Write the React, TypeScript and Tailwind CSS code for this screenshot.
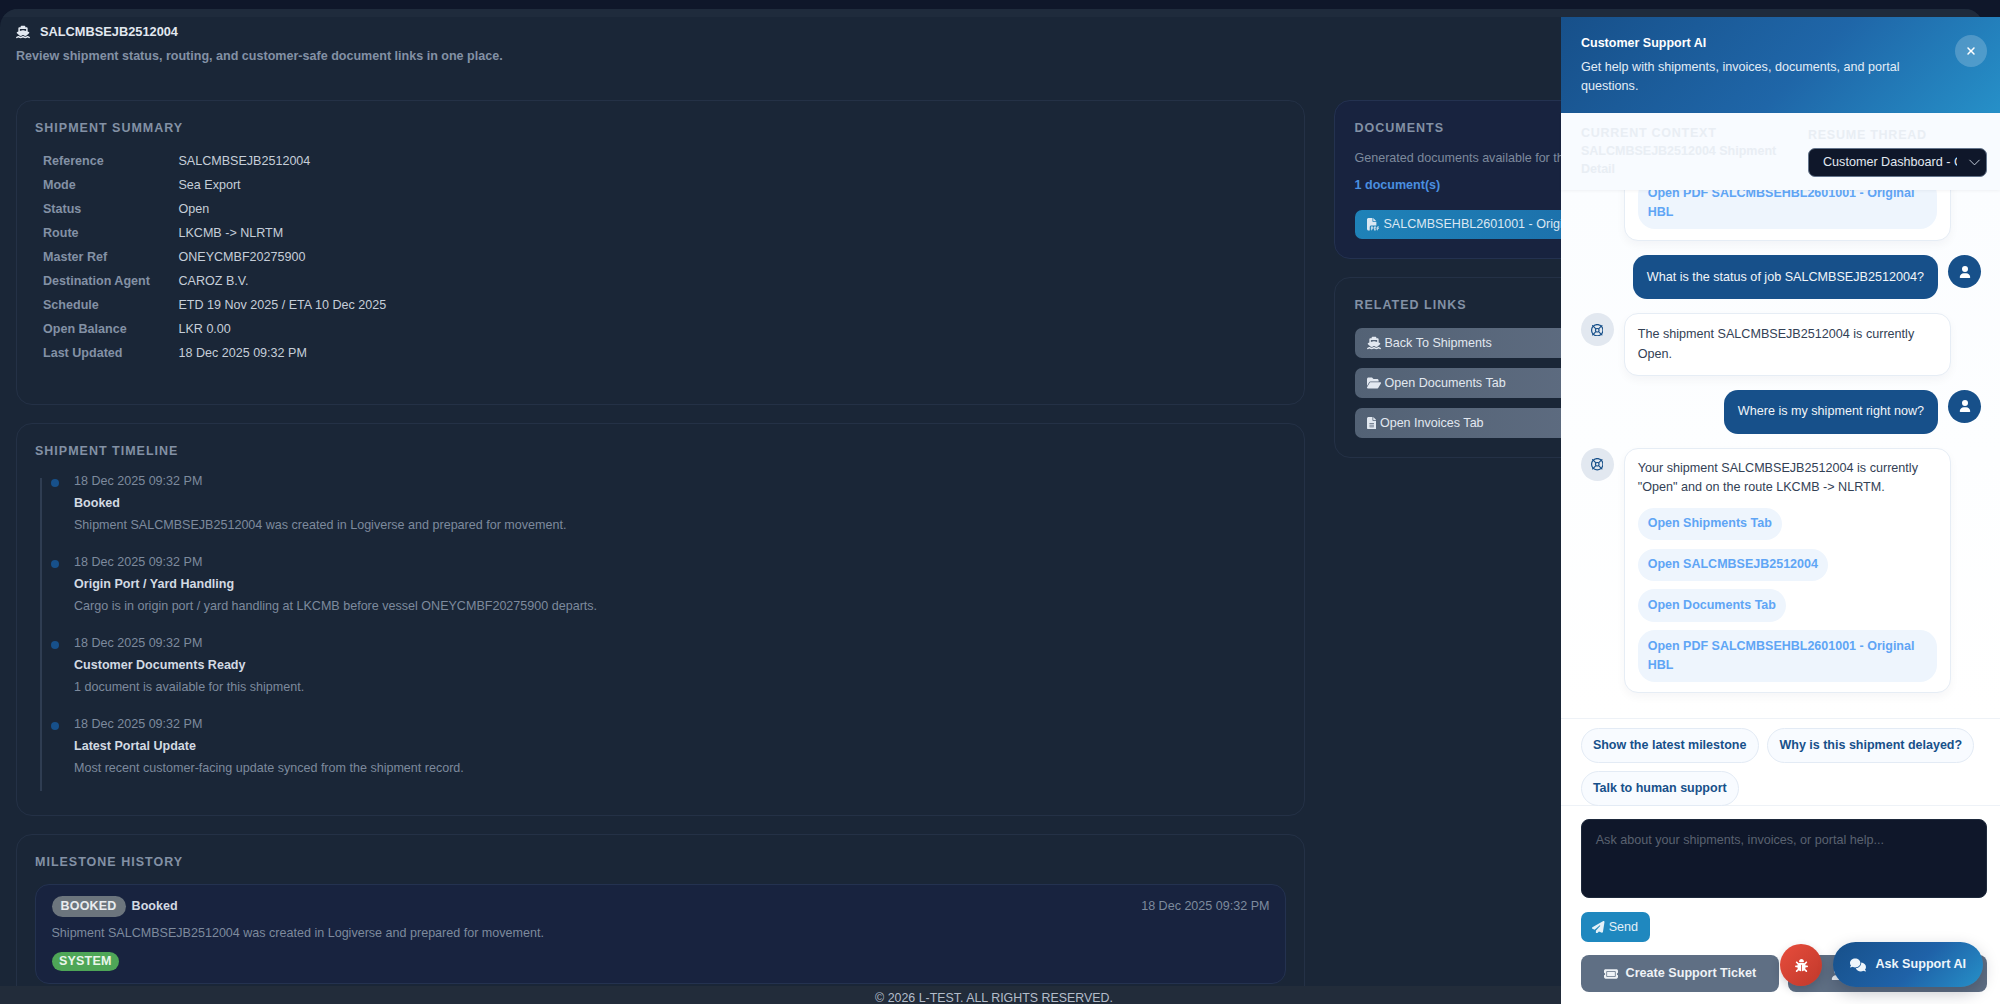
import { FaShip, FaFilePdf, FaFolderOpen, FaFileLines, FaUser, FaRegLifeRing, FaPaperPlane, FaTicket, FaBug, FaComments, FaXmark } from "react-icons/fa6"
import { ChevronDown } from "lucide-react"

const summary = [
  ["Reference", "SALCMBSEJB2512004"],
  ["Mode", "Sea Export"],
  ["Status", "Open"],
  ["Route", "LKCMB -> NLRTM"],
  ["Master Ref", "ONEYCMBF20275900"],
  ["Destination Agent", "CAROZ B.V."],
  ["Schedule", "ETD 19 Nov 2025 / ETA 10 Dec 2025"],
  ["Open Balance", "LKR 0.00"],
  ["Last Updated", "18 Dec 2025 09:32 PM"],
]

const timeline = [
  ["Booked", "Shipment SALCMBSEJB2512004 was created in Logiverse and prepared for movement."],
  ["Origin Port / Yard Handling", "Cargo is in origin port / yard handling at LKCMB before vessel ONEYCMBF20275900 departs."],
  ["Customer Documents Ready", "1 document is available for this shipment."],
  ["Latest Portal Update", "Most recent customer-facing update synced from the shipment record."],
]

function SectionTitle({ children }: { children: string }) {
  return <h3 className="text-[12.5px] leading-[16px] font-bold tracking-[1px] text-[#8391a5]">{children}</h3>
}

function Pill({ children }: { children: string }) {
  return <div className="w-fit rounded-[17px] bg-[#eef5fd] px-[10px] py-[6.5px] text-[12.5px] leading-[19.3px] font-bold text-[#5fa5f5]">{children}</div>
}

function BotAvatar() {
  return (
    <div className="flex h-[33px] w-[33px] shrink-0 items-center justify-center rounded-full bg-[#e2e8f0] text-[12.5px] text-[#17508a]">
      <FaRegLifeRing />
    </div>
  )
}

function UserRow({ text }: { text: string }) {
  return (
    <div className="flex items-start justify-end gap-[10px]">
      <div className="rounded-[14px] bg-[#17508a] px-[14px] py-[12.35px] text-[12.6px] leading-[19.3px] text-[#f1f5f9]">{text}</div>
      <div className="flex h-[33px] w-[33px] shrink-0 items-center justify-center rounded-full bg-[#17508a] text-[12px] text-white">
        <FaUser />
      </div>
    </div>
  )
}

function RelatedLink({ icon, label }: { icon: React.ReactNode; label: string }) {
  return (
    <div className="flex h-[30px] w-[260px] items-center gap-[3.5px] rounded-[7px] bg-[linear-gradient(90deg,#536275,#5f6d82)] px-[12.5px] text-[12.55px] text-[#e2e8f0]">
      {icon}
      {label}
    </div>
  )
}

export default function App() {
  return (
    <div className="relative flex h-[1004px] w-[2000px] flex-col overflow-hidden bg-[#0f172a] font-['Liberation_Sans',Arial,sans-serif]">
      <div className="min-h-0 flex-1 pt-[9px] pr-[17px]">
        <div className="h-full overflow-hidden rounded-t-[18px] bg-[#1a2637]">
          {/* Page header */}
          <div className="h-[8px] bg-[#1f2b3c]" />
          <div className="px-[16px] pt-[7px]">
            <div className="flex h-[16px] items-center gap-[10px] text-[12.8px] font-bold text-[#e2e8f0]">
              <FaShip className="text-[14px]" />
              SALCMBSEJB2512004
            </div>
            <p className="mt-[8px] text-[12.55px] leading-[16px] font-bold text-[#8391a5]">
              Review shipment status, routing, and customer-safe document links in one place.
            </p>
          </div>

          <div className="mt-[36px] grid grid-cols-[1289px_633px] gap-[29px] px-[16px]">
            {/* Left column */}
            <div className="flex flex-col gap-[18px]">
              <section className="h-[305px] rounded-[16px] border border-[#243146] px-[18px] pt-[19px]">
                <SectionTitle>SHIPMENT SUMMARY</SectionTitle>
                <div className="mt-[13.6px] pl-[8px]">
                  {summary.map(([label, value]) => (
                    <div key={label} className="flex h-[24px] items-center text-[12.55px]">
                      <span className="w-[135.5px] font-bold text-[#8391a5]">{label}</span>
                      <span className="text-[#c6ced9]">{value}</span>
                    </div>
                  ))}
                </div>
              </section>

              <section className="h-[393px] rounded-[16px] border border-[#243146] px-[18px] pt-[19px]">
                <SectionTitle>SHIPMENT TIMELINE</SectionTitle>
                <div className="relative mt-[11px] pl-[39px]">
                  <span className="absolute top-[8px] left-[5px] h-[313px] w-[2px] bg-[#2f3d52]" />
                  {timeline.map(([title, desc]) => (
                    <div key={title} className="relative h-[81px] text-[12.55px] leading-[22px]">
                      <span className="absolute top-[9px] -left-[23px] h-[8px] w-[8px] rounded-full bg-[#17508a]" />
                      <div className="text-[#7d8a9d]">18 Dec 2025 09:32 PM</div>
                      <div className="font-bold text-[#d3dae3]">{title}</div>
                      <div className="text-[#7d8a9d]">{desc}</div>
                    </div>
                  ))}
                </div>
              </section>

              <section className="h-[300px] rounded-[16px] border border-[#243146] px-[18px] pt-[19px]">
                <SectionTitle>MILESTONE HISTORY</SectionTitle>
                <div className="mt-[14px] rounded-[14px] border border-[#243250] bg-[#18233f] px-[15.5px] pt-[11px] pb-[12px]">
                  <div className="flex items-center justify-between">
                    <div className="flex items-center gap-[6px]">
                      <span className="flex h-[21px] items-center rounded-full bg-[#6c757d] px-[9px] text-[12.5px] font-bold tracking-[0.2px] text-[#e9ecef]">BOOKED</span>
                      <span className="text-[12.55px] font-bold text-[#d3dae3]">Booked</span>
                    </div>
                    <span className="text-[12.55px] text-[#7d8a9d]">18 Dec 2025 09:32 PM</span>
                  </div>
                  <p className="mt-[7px] text-[12.55px] leading-[18px] text-[#7d8a9d]">
                    Shipment SALCMBSEJB2512004 was created in Logiverse and prepared for movement.
                  </p>
                  <span className="mt-[10px] flex h-[19px] w-fit items-center rounded-full bg-[#4ea657] px-[7.5px] text-[12.5px] font-bold tracking-[0.2px] text-[#e9f5ea]">SYSTEM</span>
                </div>
              </section>
            </div>

            {/* Right column, mostly behind the panel */}
            <div className="flex flex-col gap-[18px]">
              <section className="h-[159px] rounded-[16px] border border-[#243250] bg-[#18233f] px-[19.5px] pt-[19px]">
                <SectionTitle>DOCUMENTS</SectionTitle>
                <p className="mt-[14px] text-[12.55px] leading-[16px] whitespace-nowrap text-[#7d8a9d]">Generated documents available for this shipment.</p>
                <p className="mt-[11px] text-[12.55px] leading-[16px] font-bold text-[#4a8fe0]">1 document(s)</p>
                <div className="mt-[17px] flex h-[29px] w-[400px] items-center gap-[4px] rounded-[7px] bg-[linear-gradient(90deg,#1f82b8,#1a62a0)] px-[12.5px] text-[12.55px] text-[#dbe7f2]">
                  <FaFilePdf className="h-[12.5px] w-[12.5px]" />
                  SALCMBSEHBL2601001 - Original HBL
                </div>
              </section>
              <section className="h-[181px] rounded-[16px] border border-[#243146] px-[19.5px] pt-[19px]">
                <SectionTitle>RELATED LINKS</SectionTitle>
                <div className="mt-[15px] flex flex-col gap-[10px]">
                  <RelatedLink icon={<FaShip className="h-[14px] w-[14px]" />} label="Back To Shipments" />
                  <RelatedLink icon={<FaFolderOpen className="h-[14px] w-[14px]" />} label="Open Documents Tab" />
                  <RelatedLink icon={<FaFileLines className="h-[12.5px] w-[9.4px]" />} label="Open Invoices Tab" />
                </div>
              </section>
            </div>
          </div>
        </div>
      </div>

      <footer className="h-[18px] bg-[#222c3a] pr-[12px] text-center text-[12.4px] leading-[24px] text-[#b4bdca]">
        © 2026 L-TEST. ALL RIGHTS RESERVED.
      </footer>

      {/* Support panel */}
      <aside className="absolute top-[17px] right-0 bottom-0 flex w-[439px] flex-col bg-white">
        <div className="relative h-[96px] shrink-0 bg-[linear-gradient(135deg,#17508a,#1f66a8_55%,#2690c8)] pt-[17px] pl-[20px] text-white">
          <h4 className="text-[12.5px] leading-[18px] font-bold">Customer Support AI</h4>
          <p className="mt-[6px] w-[340px] text-[12.6px] leading-[18.7px] text-[#e3edf7]">Get help with shipments, invoices, documents, and portal questions.</p>
          <button className="absolute top-[18px] right-[13px] flex h-[32px] w-[32px] items-center justify-center rounded-full bg-white/20 text-[12px] text-white">
            <FaXmark />
          </button>
        </div>

        <div className="z-10 flex h-[77px] shrink-0 gap-[19px] bg-[#f8fbff] pt-[11px] pr-[13px] pl-[20px] shadow-[0_1px_3px_rgba(15,23,42,0.05)]">
          <div className="w-[208px] text-[12.5px] leading-[18px] font-bold text-[#e9eef4]">
            <div className="tracking-[0.75px]">CURRENT CONTEXT</div>
            <div>SALCMBSEJB2512004 Shipment Detail</div>
          </div>
          <div className="flex-1">
            <div className="mt-[2px] text-[12.5px] leading-[18px] font-bold tracking-[0.75px] text-[#e9eef4]">RESUME THREAD</div>
            <div className="relative mt-[4px]">
              <select className="h-[29px] w-full appearance-none rounded-[7px] border border-[#64748b] bg-[#0f172a] pr-[29px] pl-[14px] text-[12.6px] text-[#e2e8f0]">
                <option>Customer Dashboard - Current Thread</option>
              </select>
              <ChevronDown className="absolute top-[5px] right-[3px] h-[19px] w-[19px] text-[#cbd5e1]" strokeWidth={1.2} />
            </div>
          </div>
        </div>

        <div className="flex min-h-0 flex-1 flex-col justify-end gap-[14px] overflow-hidden bg-[linear-gradient(180deg,#fbfdff,#ffffff)] pr-[19px] pb-[25px] pl-[19.7px]">
          <div className="flex shrink-0 items-start gap-[10px]">
            <div className="w-[33px]" />
            <div className="w-[327px] rounded-[14px] border border-[#e6edf5] bg-white px-[13px] pt-[11px] pb-[11px] shadow-[0_4px_10px_rgba(15,23,42,0.04)]">
              <Pill>Open PDF SALCMBSEHBL2601001 - Original HBL</Pill>
            </div>
          </div>
          <div className="shrink-0">
            <UserRow text="What is the status of job SALCMBSEJB2512004?" />
          </div>
          <div className="flex shrink-0 items-start gap-[10px]">
            <BotAvatar />
            <div className="w-[327px] rounded-[14px] border border-[#e6edf5] bg-white px-[13px] py-[11px] text-[12.6px] leading-[19.3px] text-[#334155] shadow-[0_4px_10px_rgba(15,23,42,0.04)]">
              The shipment SALCMBSEJB2512004 is currently Open.
            </div>
          </div>
          <div className="shrink-0">
            <UserRow text="Where is my shipment right now?" />
          </div>
          <div className="flex shrink-0 items-start gap-[10px]">
            <BotAvatar />
            <div className="w-[327px] rounded-[14px] border border-[#e6edf5] bg-white px-[13px] py-[10.3px] text-[12.6px] leading-[19.3px] text-[#334155] shadow-[0_4px_10px_rgba(15,23,42,0.04)]">
              Your shipment SALCMBSEJB2512004 is currently "Open" and on the route LKCMB -&gt; NLRTM.
              <div className="mt-[10px] flex flex-col gap-[8.5px]">
                <Pill>Open Shipments Tab</Pill>
                <Pill>Open SALCMBSEJB2512004</Pill>
                <Pill>Open Documents Tab</Pill>
                <Pill>Open PDF SALCMBSEHBL2601001 - Original HBL</Pill>
              </div>
            </div>
          </div>
        </div>

        <div className="flex h-[88px] shrink-0 flex-wrap content-start gap-x-[8.7px] gap-y-[8.5px] border-y border-[#eef2f7] pt-[9px] pl-[19.7px]">
          {["Show the latest milestone", "Why is this shipment delayed?", "Talk to human support"].map((chip) => (
            <button key={chip} className="h-[34.7px] rounded-full border border-[#e3ebf5] bg-[#f8fbff] px-[11.2px] text-[12.5px] font-bold text-[#17508a]">
              {chip}
            </button>
          ))}
        </div>

        <div className="flex-none px-[19.7px] pt-[13px] pr-[13px] pb-[12px]">
          <textarea
            readOnly
            placeholder="Ask about your shipments, invoices, or portal help..."
            className="block h-[79px] w-full resize-none rounded-[8px] border border-[#1e293b] bg-[#0f172a] px-[14px] py-[11px] text-[12.6px] text-[#e2e8f0] placeholder:text-[#5a6270]"
          />
          <button className="mt-[14px] flex h-[30px] items-center gap-[4px] rounded-[7px] bg-[#1f88bf] px-[11.5px] text-[12.6px] text-[#e3f0f8]">
            <FaPaperPlane className="text-[12.5px]" />
            Send
          </button>
          <div className="mt-[13px] flex gap-[9px]">
            <button className="flex h-[37px] w-[198.5px] items-center justify-center gap-[8px] rounded-[8px] bg-[#5f6f84] text-[12.6px] font-bold text-[#eef2f6]">
              <FaTicket className="text-[14px]" />
              Create Support Ticket
            </button>
            <button className="flex h-[37px] flex-1 items-center justify-center gap-[8px] rounded-[8px] bg-[#5f6f84] text-[12.6px] font-bold text-[#eef2f6]">
              <FaUser className="text-[12px]" />
              Talk To Support
            </button>
          </div>
        </div>
      </aside>

      {/* Floating buttons */}
      <button className="absolute top-[944px] left-[1780px] flex h-[42px] w-[42px] items-center justify-center rounded-full bg-[linear-gradient(135deg,#e74c3c,#c0392b)] text-[13px] text-white shadow-[0_4px_10px_rgba(15,23,42,0.2)]">
        <FaBug />
      </button>
      <button className="absolute top-[942px] left-[1833px] flex h-[45px] w-[150px] items-center gap-[10px] rounded-full bg-[linear-gradient(135deg,#17508a,#1f62a8_55%,#2690c8)] pl-[16.5px] text-[12.6px] font-bold text-[#eef5fb] shadow-[0_6px_16px_rgba(15,23,42,0.25)]">
        <FaComments className="text-[16px]" />
        Ask Support AI
      </button>
    </div>
  )
}
